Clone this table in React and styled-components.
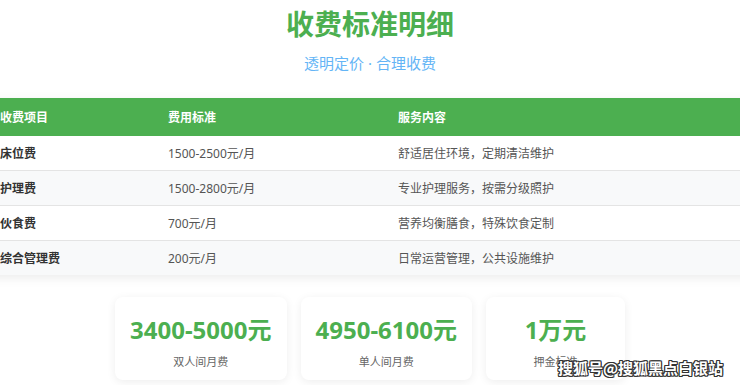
import React from 'react'
import styled, { createGlobalStyle } from 'styled-components'

const GlobalStyle = createGlobalStyle`
  html, body {
    margin: 0;
    padding: 0;
    background: #fff;
    overflow: hidden;
  }
  body {
    font-family: "Noto Sans", "Noto Sans CJK SC", sans-serif;
  }
`

const StyledPage = styled.div`
  position: relative;
  width: 740px;
  height: 385px;
  overflow: hidden;
`

const Title = styled.h2`
  margin: 0;
  padding-top: 4px;
  text-align: center;
  font-size: 28px;
  line-height: 40px;
  font-weight: 700;
  color: #4caf50;
`

const Subtitle = styled.p`
  margin: 8px 0 0 0;
  text-align: center;
  font-size: 15px;
  line-height: 22px;
  color: #64b5f6;
`

const Table = styled.table`
  width: 770px;
  margin: 24px 0 0 -15px;
  table-layout: fixed;
  border-collapse: collapse;
  background: #fff;
  box-shadow: 0 3px 10px rgba(0, 0, 0, 0.08);
  font-size: 12px;
`

const HeadCell = styled.th`
  height: 38px;
  padding: 0 15px;
  text-align: left;
  font-weight: 700;
  color: #fff;
  background: #4caf50;
  width: ${props => props.w || 'auto'};
`

const Row = styled.tr`
  background: ${props => (props.striped ? '#f8f9fa' : '#fff')};
  border-bottom: 1px solid #e4e4e4;
  &:last-child {
    border-bottom: none;
  }
`

const Cell = styled.td`
  height: 34px;
  padding: 0 15px;
  color: ${props => (props.name ? '#333' : '#555')};
  font-weight: ${props => (props.name ? 700 : 400)};
`

const CardRow = styled.div`
  display: flex;
  justify-content: center;
  gap: 14px;
  margin-top: 22px;
`

const Card = styled.div`
  min-width: 109px;
  padding: 17px 15px 10px;
  background: #fff;
  border-radius: 8px;
  box-shadow: 0 2px 10px rgba(0, 0, 0, 0.07);
  text-align: center;
`

const CardValue = styled.div`
  font-size: 24px;
  line-height: 32px;
  font-weight: 700;
  color: #4caf50;
`

const CardLabel = styled.div`
  margin-top: 8px;
  font-size: 11px;
  line-height: 16px;
  color: #666;
`

const Watermark = styled.div`
  position: absolute;
  right: 17px;
  bottom: 7px;
  font-family: "Noto Sans CJK SC", sans-serif;
  font-size: 15px;
  font-weight: 700;
  color: #fff;
  text-shadow:
    1px 1px 0 #333, -1px -1px 0 #333, 1px -1px 0 #333, -1px 1px 0 #333,
    0 1px 0 #333, 0 -1px 0 #333, 1px 0 0 #333, -1px 0 0 #333;
`

const fees = [
  { name: '床位费', price: '1500-2500元/月', desc: '舒适居住环境，定期清洁维护' },
  { name: '护理费', price: '1500-2800元/月', desc: '专业护理服务，按需分级照护' },
  { name: '伙食费', price: '700元/月', desc: '营养均衡膳食，特殊饮食定制' },
  { name: '综合管理费', price: '200元/月', desc: '日常运营管理，公共设施维护' }
]

const summary = [
  { value: '3400-5000元', label: '双人间月费' },
  { value: '4950-6100元', label: '单人间月费' },
  { value: '1万元', label: '押金标准' }
]

export default function App() {
  return (
    <StyledPage>
      <GlobalStyle />
      <Title>收费标准明细</Title>
      <Subtitle>透明定价 · 合理收费</Subtitle>
      <Table>
        <thead>
          <tr>
            <HeadCell w="138px">收费项目</HeadCell>
            <HeadCell w="200px">费用标准</HeadCell>
            <HeadCell>服务内容</HeadCell>
          </tr>
        </thead>
        <tbody>
          {fees.map((fee, idx) => (
            <Row key={fee.name} striped={idx % 2 === 1}>
              <Cell name="1">{fee.name}</Cell>
              <Cell>{fee.price}</Cell>
              <Cell>{fee.desc}</Cell>
            </Row>
          ))}
        </tbody>
      </Table>
      <CardRow>
        {summary.map(item => (
          <Card key={item.label}>
            <CardValue>{item.value}</CardValue>
            <CardLabel>{item.label}</CardLabel>
          </Card>
        ))}
      </CardRow>
      <Watermark>搜狐号@搜狐黑点白银站</Watermark>
    </StyledPage>
  )
}
